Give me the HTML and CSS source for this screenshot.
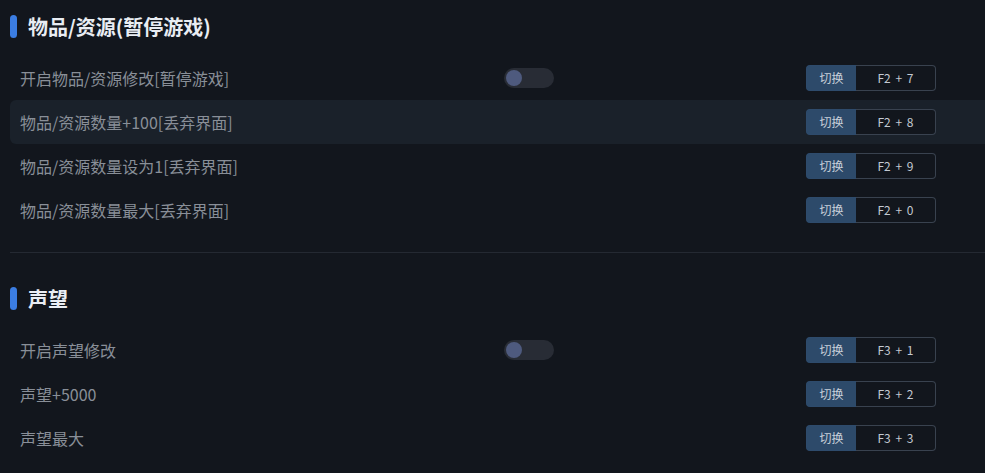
FILE: index.html
```html
<!DOCTYPE html>
<html>
    <head>
        <meta charset="utf-8" />
        <title>修改器</title>
        <link rel="stylesheet" href="styles.css">
    </head>

    <body>
        <div class="m-panel">
            <div class="sec">
                <h2 class="tit">物品/资源(暂停游戏)</h2>
                <ul class="list">
                    <li>
                        <span class="name">开启物品/资源修改[暂停游戏]</span>
                        <span class="slot"><i class="switch"></i></span>
                        <span class="key"><b>切换</b><em>F2 + 7</em></span>
                    </li>
                    <li class="hover">
                        <span class="name">物品/资源数量+100[丢弃界面]</span>
                        <span class="slot"></span>
                        <span class="key"><b>切换</b><em>F2 + 8</em></span>
                    </li>
                    <li>
                        <span class="name">物品/资源数量设为1[丢弃界面]</span>
                        <span class="slot"></span>
                        <span class="key"><b>切换</b><em>F2 + 9</em></span>
                    </li>
                    <li>
                        <span class="name">物品/资源数量最大[丢弃界面]</span>
                        <span class="slot"></span>
                        <span class="key"><b>切换</b><em>F2 + 0</em></span>
                    </li>
                </ul>
            </div>

            <div class="line"></div>

            <div class="sec">
                <h2 class="tit">声望</h2>
                <ul class="list">
                    <li>
                        <span class="name">开启声望修改</span>
                        <span class="slot"><i class="switch"></i></span>
                        <span class="key"><b>切换</b><em>F3 + 1</em></span>
                    </li>
                    <li>
                        <span class="name">声望+5000</span>
                        <span class="slot"></span>
                        <span class="key"><b>切换</b><em>F3 + 2</em></span>
                    </li>
                    <li>
                        <span class="name">声望最大</span>
                        <span class="slot"></span>
                        <span class="key"><b>切换</b><em>F3 + 3</em></span>
                    </li>
                </ul>
            </div>
        </div>
    </body>
</html>
```

FILE: styles.css
```css
*{margin:0;padding:0;}
li{list-style:none;}
html,body{height:100%;overflow:hidden;}
body{background:#12161d;font-family:"Microsoft YaHei","Noto Sans CJK SC","Noto Sans",sans-serif;color:#898f98;}

.m-panel{padding-left:10px;}
.sec{padding-top:8px;}
.sec .tit{display:flex;align-items:center;height:36px;margin-bottom:12px;font-size:20px;font-weight:bold;color:#e9edf3;}
.sec .tit:before{content:"";width:7px;height:23px;margin-right:11px;border-radius:4px;background:#3b7de2;}

.list li{display:flex;align-items:center;height:44px;padding-left:10px;border-radius:6px 0 0 6px;font-size:16px;}
.list li.hover{background:#1a212a;}
.list .name{width:484px;}
.list .slot{display:flex;width:302px;}

.switch{position:relative;display:block;width:50px;height:20px;border-radius:10px;background:#282c35;}
.switch:after{content:"";position:absolute;left:2px;top:2px;width:16px;height:16px;border-radius:50%;background:#4e5a7e;}

.key{display:flex;height:26px;font-size:12px;line-height:24px;}
.key b{width:49px;border:1px solid #2e4b6c;border-right:0;border-radius:4px 0 0 4px;background:#2d4a6a;font-weight:normal;text-align:center;color:#c8d0da;}
.key em{width:79px;border:1px solid #39424f;border-left:0;border-radius:0 4px 4px 0;background:#12161d;font-style:normal;text-align:center;color:#c3c9d2;word-spacing:2px;}

.line{height:1px;margin:20px 0 19px;background:#242932;}
```
